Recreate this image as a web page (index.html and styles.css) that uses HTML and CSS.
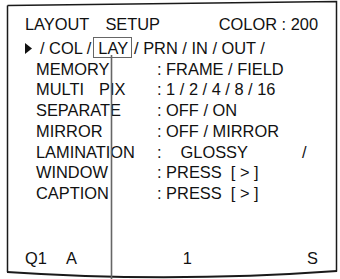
FILE: index.html
```html
<!DOCTYPE html>
<html>
<head>
<meta charset="utf-8">
<link rel="stylesheet" href="styles.css">
</head>
<body>
<div class="screen">
  <div class="content">
    <div class="head">
      <span>LAYOUT</span><span class="setup">SETUP</span><span class="color">COLOR : 200</span>
    </div>
    <div class="tabs">
      <svg class="arrow" width="7" height="11" viewBox="0 0 7 11"><polygon points="0,0 7,5.5 0,11" fill="#111"/></svg>
      <span class="t">/ COL /</span><span class="sel">LAY</span><span class="t">/ PRN / IN / OUT /</span>
    </div>
    <div class="grid">
      <span>MEMORY</span><span>: FRAME / FIELD</span>
      <span>MULTI<span class="pix">PIX</span></span><span>: 1 / 2 / 4 / 8 / 16</span>
      <span>SEPARATE</span><span>: OFF / ON</span>
      <span>MIRROR</span><span>: OFF / MIRROR</span>
      <span>LAMINATION</span><span class="lam"><span>:</span><span class="glossy">GLOSSY</span><span class="slash">/</span></span>
      <span>WINDOW</span><span>: PRESS&nbsp; [ &gt; ]</span>
      <span>CAPTION</span><span>: PRESS&nbsp; [ &gt; ]</span>
    </div>
    <div class="foot">
      <span>Q1</span><span class="fa">A</span><span class="f1">1</span><span class="fs">S</span>
    </div>
  </div>
  <svg class="overlay" width="340" height="279" viewBox="0 0 340 279">
    <path d="M7.5,5.5 L336.5,1.5 L336.5,271.5" fill="none" stroke="#1a1a1a" stroke-width="1.5"/>
    <path d="M7.5,5.5 L7.5,272" fill="none" stroke="#1a1a1a" stroke-width="1.5"/>
    <path d="M7,272 Q170,283 337,271" fill="none" stroke="#1a1a1a" stroke-width="2.2"/>
    <line x1="111.5" y1="55" x2="111.5" y2="279" stroke="#666" stroke-width="1.6"/>
  </svg>
</div>
</body>
</html>
```

FILE: styles.css
```css
html, body {
  margin: 0;
  padding: 0;
  background: #fff;
}
.screen {
  position: relative;
  width: 340px;
  height: 279px;
  overflow: hidden;
  font-family: "Liberation Sans", Arial, sans-serif;
  font-size: 16.4px;
  color: #111;
}
.content {
  padding: 14px 22px 0 25px;
  line-height: 20.7px;
}
.head {
  display: flex;
  white-space: pre;
  margin-bottom: 2.3px;
}
.setup {
  margin-left: 16px;
}
.color {
  margin-left: auto;
  padding-right: 0;
}
.tabs {
  display: flex;
  align-items: baseline;
  white-space: pre;
}
.arrow {
  align-self: center;
  margin-right: 8px;
  margin-top: 1px;
}
.sel {
  display: inline-block;
  border: 1.6px solid #666;
  line-height: 17px;
  padding: 2px 3px 0 4px;
  margin: 0 2px 0 2px;
}
.grid {
  display: grid;
  grid-template-columns: 121px auto;
  padding-left: 11px;
  white-space: pre;
}
.pix {
  margin-left: 15px;
}
.lam {
  display: flex;
}
.glossy {
  margin-left: 19px;
}
.slash {
  margin-left: 54px;
}
.foot {
  display: flex;
  margin-top: 44.4px;
}
.fa {
  margin-left: 19px;
}
.f1 {
  margin-left: 106px;
}
.fs {
  margin-left: auto;
  padding-right: 0;
}
.overlay {
  position: absolute;
  left: 0;
  top: 0;
  pointer-events: none;
}
```
